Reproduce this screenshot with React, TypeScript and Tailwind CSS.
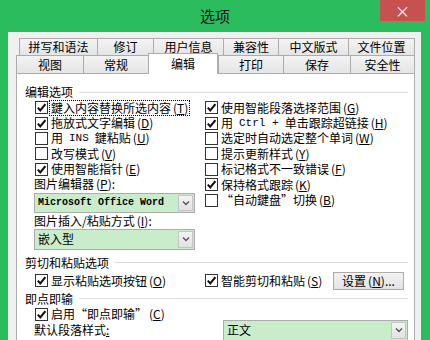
import React from 'react';
import clsx from 'clsx';

const Check = ({ checked }: { checked?: boolean }) => (
  <span className="flex h-[13px] w-[13px] shrink-0 items-center justify-center border border-[#333333] bg-white">
    {checked && (
      <svg width="11" height="11" viewBox="0 0 11 11">
        <path d="M1.8 5.6 L4.3 8.4 L9.4 2.2" fill="none" stroke="#111" strokeWidth="2.1" />
      </svg>
    )}
  </span>
);

const Key = ({ k }: { k: string }) => (
  <span className="ml-[2px]">
    (<span className="underline">{k}</span>)
  </span>
);

const Mono = ({ children }: { children: React.ReactNode }) => (
  <span className="mx-[6px] font-['Liberation_Mono',monospace] text-[11px]">{children}</span>
);

const Option = ({
  checked,
  label,
  k,
  focus,
  h = 'h-[15.4px]',
}: {
  checked?: boolean;
  label: React.ReactNode;
  k: string;
  focus?: boolean;
  h?: string;
}) => (
  <div className={clsx('flex items-center', h)}>
    <span className="ml-px">
      <Check checked={checked} />
    </span>
    <span
      className={clsx(
        'ml-[2px] flex h-[14px] items-center whitespace-nowrap px-px leading-none',
        focus && 'outline outline-1 outline-offset-0 outline-dotted outline-black'
      )}
    >
      {label}
      <Key k={k} />
    </span>
  </div>
);

const Chevron = () => (
  <svg width="8" height="6" viewBox="0 0 8 6">
    <path d="M1 1.5 L4 4.5 L7 1.5" fill="none" stroke="#555" strokeWidth="1.4" />
  </svg>
);

const Dropdown = ({ children, className }: { children: React.ReactNode; className: string }) => (
  <div className={clsx('flex border border-[#acacac] bg-[#c9ecca]', className)}>
    <div className="flex flex-1 items-center overflow-hidden whitespace-nowrap pl-[3px] leading-none">{children}</div>
    <div className="m-px flex w-[15px] items-center justify-center border border-[#c4c4c4] bg-gradient-to-b from-[#f4f4f4] to-[#e2e2e2]">
      <Chevron />
    </div>
  </div>
);

const Header = ({ text }: { text: string }) => (
  <div className="flex h-[16px] items-center pl-[8px] pr-[6px] leading-none">
    <span className="whitespace-nowrap">{text}</span>
    <span className="ml-[6px] h-px flex-1 bg-[#dcdcdc]" />
  </div>
);

const row1 = [
  { t: '拼写和语法', w: 'w-[78px]' },
  { t: '修订', w: 'w-[56px]' },
  { t: '用户信息', w: 'w-[70px]' },
  { t: '兼容性', w: 'w-[55px]' },
  { t: '中文版式', w: 'w-[70px]' },
  { t: '文件位置', w: 'w-[67px]' },
];

const row2 = [
  { t: '视图', w: 'w-[67px]' },
  { t: '常规', w: 'w-[65px]' },
  { t: '编辑', w: 'w-[70px]', active: true },
  { t: '打印', w: 'w-[65px]' },
  { t: '保存', w: 'w-[67px]' },
  { t: '安全性', w: 'w-[65px]' },
];

const App = () => {
  return (
    <div className="flex h-[340px] w-[430px] flex-col overflow-hidden bg-[#2bbd5d] font-['Noto_Sans_CJK_SC','Liberation_Sans',sans-serif] text-[12px] text-black">
      {/* 标题栏 */}
      <div className="grid h-[32px] shrink-0 grid-cols-[1fr_auto_1fr]">
        <div />
        <div className="pt-[5px] text-[15px] leading-[22px] text-[#111]">选项</div>
        <div className="flex justify-end pr-[5px]">
          <div className="flex h-[21px] w-[45px] items-center justify-center bg-[#c75050] text-[15px] leading-none text-white">
            ×
          </div>
        </div>
      </div>

      {/* 客户区 */}
      <div className="ml-[8px] mr-[9px] flex-1 bg-[#f0f0f0] pl-[8px] pr-[6px] pt-[6px]">
        {/* 第一排标签 */}
        <div className="flex h-[17px] pl-[3px]">
          {row1.map((tab, i) => (
            <div
              key={tab.t}
              className={clsx(
                'flex items-center justify-center border-l border-t border-[#acacac] bg-gradient-to-b from-[#f3f3f3] to-[#e5e5e5] leading-none',
                tab.w,
                i === row1.length - 1 && 'border-r'
              )}
            >
              {tab.t}
            </div>
          ))}
        </div>
        {/* 第二排标签 */}
        <div className="flex h-[18px] items-start">
          {row2.map((tab, i) =>
            tab.active ? (
              <div
                key={tab.t}
                className={clsx(
                  'relative z-10 -mt-[2px] flex h-[21px] items-center justify-center border-x border-t border-[#acacac] bg-white pb-[1px] leading-none',
                  tab.w
                )}
              >
                {tab.t}
              </div>
            ) : (
              <div
                key={tab.t}
                className={clsx(
                  'flex h-[18px] items-center justify-center border-l border-t border-[#acacac] bg-gradient-to-b from-[#f3f3f3] to-[#e5e5e5] leading-none',
                  tab.w,
                  i === row2.length - 1 && 'border-r'
                )}
              >
                {tab.t}
              </div>
            )
          )}
        </div>

        {/* 标签页内容 */}
        <div className="h-[300px] border-x border-t border-[#acacac] bg-white pt-[10px]">
          <Header text="编辑选项" />
          <div className="grid grid-cols-[170px_1fr] pl-[17px]">
            <div className="flex flex-col">
              <Option checked focus label="鍵入内容替换所选内容" k="T" />
              <Option checked label="拖放式文字编辑" k="D" />
              <Option
                label={
                  <>
                    用<Mono>INS</Mono>鍵粘贴
                  </>
                }
                k="U"
              />
              <Option label="改写模式" k="V" />
              <Option checked label="使用智能指针" k="E" />
              <div className="flex h-[14px] items-center leading-none">
                图片编辑器<Key k="P" />:
              </div>
              <Dropdown className="mt-[2px] h-[20px] w-[161px]">
                <span className="font-['Liberation_Mono',monospace] text-[10px] font-bold">Microsoft Office Word</span>
              </Dropdown>
              <div className="flex h-[16px] items-center leading-none">
                图片插入/粘贴方式<Key k="I" />:
              </div>
              <Dropdown className="h-[21px] w-[161px]">嵌入型</Dropdown>
            </div>
            <div className="flex flex-col">
              <Option checked label="使用智能段落选择范围" k="G" />
              <Option
                checked
                label={
                  <>
                    用<Mono>Ctrl +</Mono>单击跟踪超链接
                  </>
                }
                k="H"
              />
              <Option label="选定时自动选定整个单词" k="W" />
              <Option label="提示更新样式" k="Y" />
              <Option label="标记格式不一致错误" k="F" />
              <Option checked label="保持格式跟踪" k="K" />
              <Option label="“自动鍵盘”切换" k="B" />
            </div>
          </div>

          <div className="mt-[5px]">
            <Header text="剪切和粘贴选项" />
          </div>
          <div className="grid h-[20px] grid-cols-[170px_1fr] items-center pl-[17px]">
            <Option checked label="显示粘贴选项按钮" k="O" h="h-[20px]" />
            <div className="flex items-center pr-[10px]">
              <Option checked label="智能剪切和粘贴" k="S" h="h-[20px]" />
              <div className="ml-auto flex h-[18px] w-[71px] items-center justify-center border border-[#acacac] bg-gradient-to-b from-[#f2f2f2] to-[#e3e3e3] leading-none">
                设置<Key k="N" />...
              </div>
            </div>
          </div>

          <Header text="即点即输" />
          <div className="pl-[17px]">
            <Option checked label="启用“即点即输”" k="C" h="h-[15px]" />
          </div>
          <div className="-mt-[2px] flex h-[21px] items-center pl-[17px] leading-none">
            <span className="w-[189px]">
              默认段落样式<span className="underline">:</span>
            </span>
            <Dropdown className="h-[21px] w-[185px]">正文</Dropdown>
          </div>
          <div className="mt-[3px]">
            <Header text="输入法控制" />
          </div>
        </div>
      </div>
    </div>
  );
};

export default App;
